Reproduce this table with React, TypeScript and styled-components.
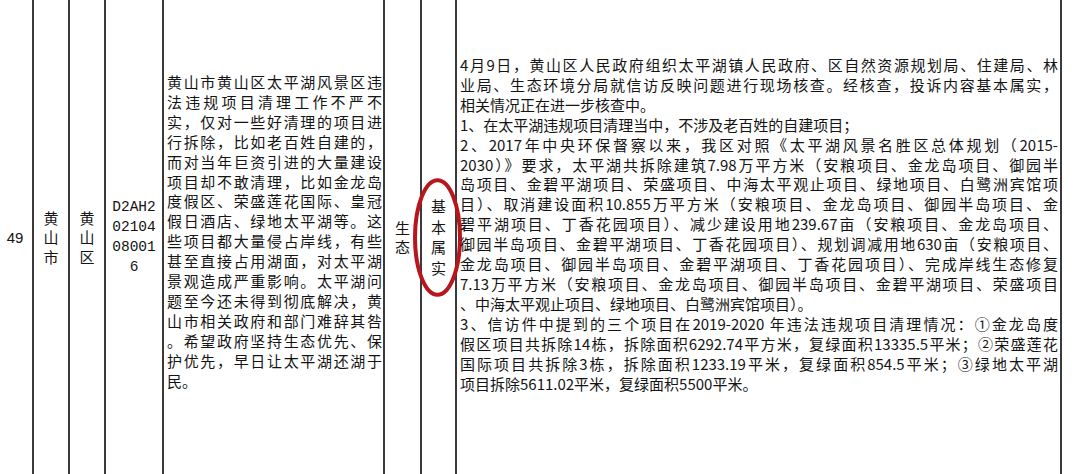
import React from "react";
import styled, { createGlobalStyle } from "styled-components";

const GlobalStyle = createGlobalStyle`
  html, body { margin: 0; padding: 0; background: #ffffff; }
  #root { width: 1074px; height: 474px; }
`;

const CJK = `"Noto Sans CJK SC", "Noto Sans", sans-serif`;

const Row = styled.div`
  display: flex;
  width: 1074px;
  height: 474px;
  overflow: hidden;
  background: #ffffff;
  color: #141414;
  font-family: ${CJK};
`;

const Cell = styled.div<{ $w: number }>`
  position: relative;
  flex: none;
  box-sizing: border-box;
  width: ${(p) => p.$w}px;
  height: 100%;
  border-right: 2px solid #3a3a3a;
  display: flex;
  flex-direction: column;
  align-items: center;
  justify-content: center;
`;

const ProseCell = styled(Cell)<{ $top: number; $pl: number; $pr: number }>`
  align-items: stretch;
  justify-content: flex-start;
  padding: ${(p) => p.$top}px ${(p) => p.$pr}px 0 ${(p) => p.$pl}px;
`;

const Rest = styled.div`
  flex: 1;
  height: 100%;
`;

const Index = styled.div`
  font-family: "Liberation Sans", Arial, sans-serif;
  font-size: 15px;
  padding-right: 2px;
`;

const VerticalText = styled.div<{ $lh: number }>`
  display: flex;
  flex-direction: column;
  align-items: center;
  font-size: 15px;
  line-height: ${(p) => p.$lh}px;
`;

const CodeText = styled.div`
  display: flex;
  flex-direction: column;
  align-items: center;
  font-family: "Liberation Mono", "Courier New", monospace;
  font-size: 14.5px;
  line-height: 20px;
`;

const Line = styled.div<{ $fill: boolean }>`
  font-size: 15px;
  line-height: 19.9px;
  text-align: justify;
  text-align-last: ${(p) => (p.$fill ? "justify" : "left")};
`;

const Oval = styled.svg`
  position: absolute;
  left: -9px;
  top: 178px;
  width: 49px;
  height: 119px;
  overflow: visible;
  pointer-events: none;
`;

const complaint = [
  "黄山市黄山区太平湖风景区违",
  "法违规项目清理工作不严不",
  "实，仅对一些好清理的项目进",
  "行拆除，比如老百姓自建的，",
  "而对当年巨资引进的大量建设",
  "项目却不敢清理，比如金龙岛",
  "度假区、荣盛莲花国际、皇冠",
  "假日酒店、绿地太平湖等。这",
  "些项目都大量侵占岸线，有些",
  "甚至直接占用湖面，对太平湖",
  "景观造成严重影响。太平湖问",
  "题至今还未得到彻底解决，黄",
  "山市相关政府和部门难辞其咎",
  "。希望政府坚持生态优先、保",
  "护优先，早日让太平湖还湖于",
  "民。",
];

const result: [string, boolean][] = [
  ["4月9日，黄山区人民政府组织太平湖镇人民政府、区自然资源规划局、住建局、林", true],
  ["业局、生态环境分局就信访反映问题进行现场核查。经核查，投诉内容基本属实，", true],
  ["相关情况正在进一步核查中。", false],
  ["1、在太平湖违规项目清理当中，不涉及老百姓的自建项目；", false],
  ["2、2017年中央环保督察以来，我区对照《太平湖风景名胜区总体规划（2015-", true],
  ["2030）》要求，太平湖共拆除建筑7.98万平方米（安粮项目、金龙岛项目、御园半", true],
  ["岛项目、金碧平湖项目、荣盛项目、中海太平观止项目、绿地项目、白鹭洲宾馆项", true],
  ["目）、取消建设面积10.855万平方米（安粮项目、金龙岛项目、御园半岛项目、金", true],
  ["碧平湖项目、丁香花园项目）、减少建设用地239.67亩（安粮项目、金龙岛项目、", true],
  ["御园半岛项目、金碧平湖项目、丁香花园项目）、规划调减用地630亩（安粮项目、", true],
  ["金龙岛项目、御园半岛项目、金碧平湖项目、丁香花园项目）、完成岸线生态修复", true],
  ["7.13万平方米（安粮项目、金龙岛项目、御园半岛项目、金碧平湖项目、荣盛项目", true],
  ["、中海太平观止项目、绿地项目、白鹭洲宾馆项目）。", false],
  ["3、信访件中提到的三个项目在2019-2020 年违法违规项目清理情况：①金龙岛度", true],
  ["假区项目共拆除14栋，拆除面积6292.74平方米，复绿面积13335.5平米；②荣盛莲花", true],
  ["国际项目共拆除3栋，拆除面积1233.19平米，复绿面积854.5平米；③绿地太平湖", true],
  ["项目拆除5611.02平米，复绿面积5500平米。", false],
];

const Vertical = ({ text, lh }: { text: string; lh: number }) => (
  <VerticalText $lh={lh}>
    {Array.from(text).map((c, i) => (
      <span key={i}>{c}</span>
    ))}
  </VerticalText>
);

export default function App() {
  return (
    <>
      <GlobalStyle />
      <Row>
        <Cell $w={34}>
          <Index>49</Index>
        </Cell>
        <Cell $w={36}>
          <Vertical text="黄山市" lh={19.5} />
        </Cell>
        <Cell $w={36}>
          <Vertical text="黄山区" lh={19.5} />
        </Cell>
        <Cell $w={58}>
          <CodeText>
            <span>D2AH2</span>
            <span>02104</span>
            <span>08001</span>
            <span>6</span>
          </CodeText>
        </Cell>
        <ProseCell $w={221} $top={72} $pl={3} $pr={1}>
          {complaint.map((l, i) => (
            <Line key={i} $fill={i < complaint.length - 1}>
              {l}
            </Line>
          ))}
        </ProseCell>
        <Cell $w={37}>
          <Vertical text="生态" lh={19.5} />
        </Cell>
        <Cell $w={35}>
          <Vertical text="基本属实" lh={20.5} />
          <Oval viewBox="0 0 49 119">
            <ellipse
              cx="24.5"
              cy="59.5"
              rx="22.5"
              ry="57.2"
              fill="none"
              stroke="#b8161c"
              strokeWidth="4"
            />
          </Oval>
        </Cell>
        <ProseCell $w={605} $top={55} $pl={3} $pr={2}>
          {result.map(([l, fill], i) => (
            <Line key={i} $fill={fill}>
              {l}
            </Line>
          ))}
        </ProseCell>
        <Rest />
      </Row>
    </>
  );
}
